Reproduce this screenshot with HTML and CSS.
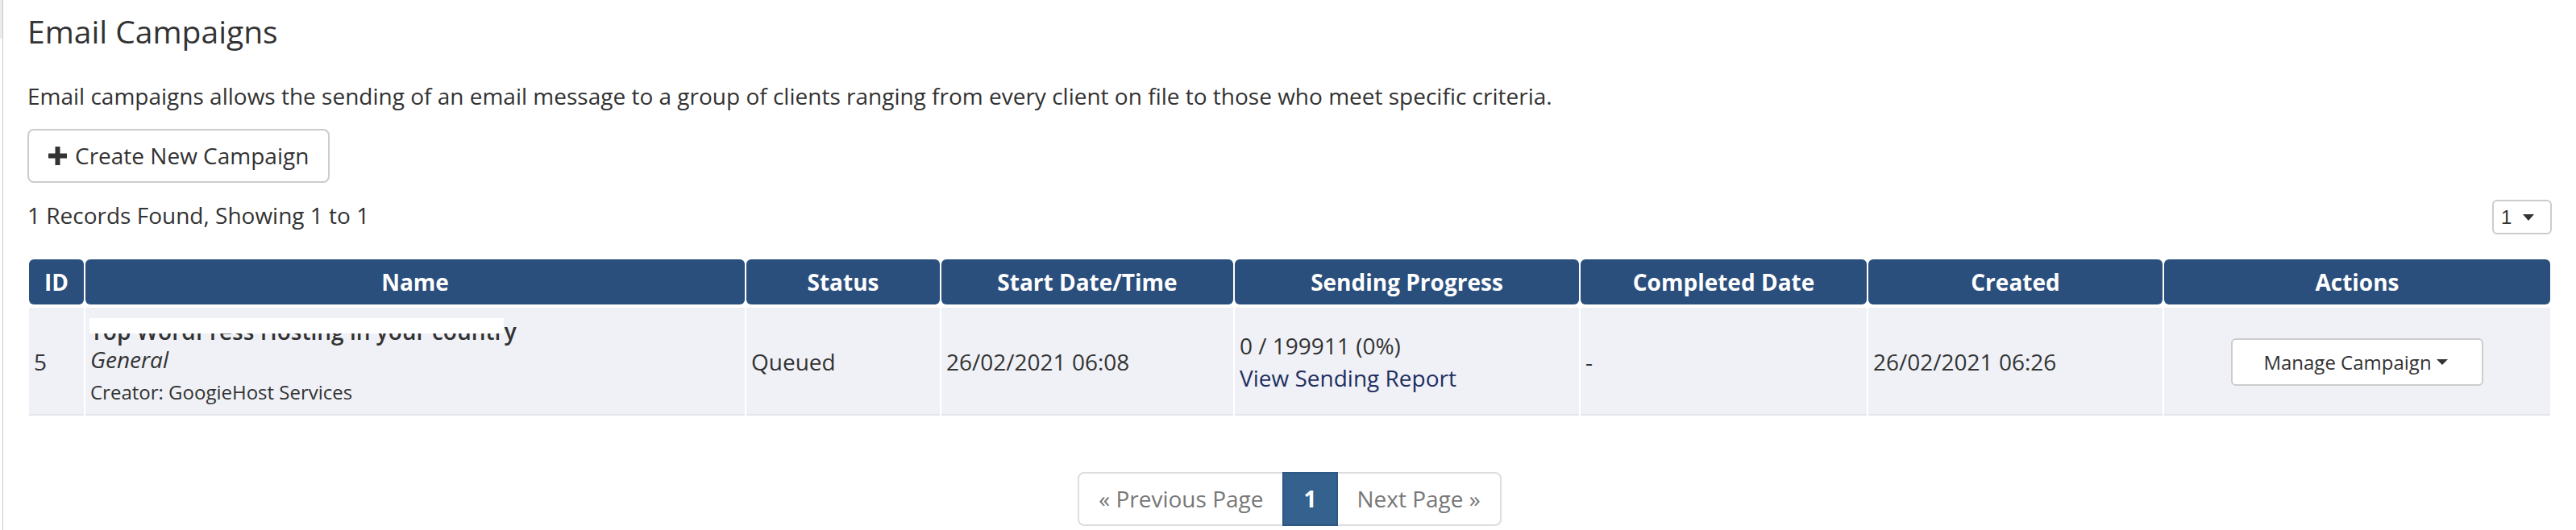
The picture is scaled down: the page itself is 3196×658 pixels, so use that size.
FILE: index.html
```html
<!DOCTYPE html>
<html lang="en">
<head>
<meta charset="utf-8">
<title>Email Campaigns</title>
<link rel="stylesheet" href="styles.css">
</head>
<body>
<div class="gutter"><div class="gutter-top"></div></div>
<div class="page">
  <h1 class="title">Email Campaigns</h1>
  <p class="intro">Email campaigns allows the sending of an email message to a group of clients ranging from every client on file to those who meet specific criteria.</p>
  <div class="top-actions">
    <button class="btn-create" type="button">
      <svg class="icon-plus" width="23" height="23" viewBox="0 0 23 23" aria-hidden="true"><rect x="0" y="8.5" width="23" height="6" fill="#333"/><rect x="8.5" y="0" width="6" height="23" fill="#333"/></svg>
      <span>Create New Campaign</span>
    </button>
  </div>
  <div class="records-bar">
    <span class="records">1 Records Found, Showing 1 to 1</span>
    <div class="page-select"><span>1</span><span class="caret-select"></span></div>
  </div>
  <table class="datatable">
    <colgroup>
      <col class="w-id"><col class="w-name"><col class="w-status"><col class="w-start"><col class="w-progress"><col class="w-completed"><col class="w-created"><col class="w-actions">
    </colgroup>
    <thead>
      <tr>
        <th>ID</th><th>Name</th><th>Status</th><th>Start Date/Time</th><th>Sending Progress</th><th>Completed Date</th><th>Created</th><th>Actions</th>
      </tr>
    </thead>
    <tbody>
      <tr>
        <td>5</td>
        <td>
          <div class="name-title"><span class="redact">Top WordPress Hosting in your country</span></div>
          <div class="name-type">General</div>
          <div class="name-creator">Creator: GoogieHost Services</div>
        </td>
        <td>Queued</td>
        <td>26/02/2021 06:08</td>
        <td>
          <div>0 / 199911 (0%)</div>
          <a class="report-link" href="#">View Sending Report</a>
        </td>
        <td>-</td>
        <td>26/02/2021 06:26</td>
        <td class="cell-actions">
          <div class="actions-wrap">
            <button class="btn-manage" type="button"><span>Manage Campaign</span><span class="caret"></span></button>
          </div>
        </td>
      </tr>
    </tbody>
  </table>
  <ul class="pager">
    <li><a class="pg pg-first" href="#">« Previous Page</a></li>
    <li><span class="pg pg-active">1</span></li>
    <li><a class="pg pg-last" href="#">Next Page »</a></li>
  </ul>
</div>
</body>
</html>
```

FILE: styles.css
```css
html, body {
  margin: 0;
  padding: 0;
  background: #fff;
}

body {
  display: flex;
  min-height: 100vh;
  font-family: "Open Sans", "DejaVu Sans", sans-serif;
  color: #333;
}

.gutter {
  width: 3px;
  flex: 0 0 3px;
}

.gutter-top {
  height: 48px;
  background: #ebebeb;
}

.page {
  flex: 1;
  border-left: 1px solid #c9c9c9;
  padding: 13px 30px 0 30px;
  min-width: 0;
}

.title {
  margin: 0;
  font-size: 39px;
  font-weight: 400;
  line-height: 52px;
  color: #333;
}

.intro {
  margin: 34px 0 0;
  font-size: 28px;
  line-height: 40px;
}

.top-actions {
  display: flex;
  margin-top: 21px;
}

.btn-create {
  display: inline-flex;
  align-items: center;
  gap: 10px;
  font-family: "Open Sans", sans-serif;
  font-size: 28px;
  line-height: 40px;
  color: #333;
  background: #fff;
  border: 2px solid #ccc;
  border-radius: 8px;
  padding: 11px 24px 12px;
  margin: 0;
}

.icon-plus {
  display: block;
}

.records-bar {
  display: flex;
  justify-content: space-between;
  align-items: flex-start;
  margin-top: 20px;
}

.records {
  font-size: 28px;
  line-height: 40px;
}

.page-select {
  box-sizing: border-box;
  margin-top: 1px;
  width: 74px;
  height: 43px;
  border: 2px solid #ccc;
  border-radius: 6px;
  display: flex;
  align-items: center;
  padding-left: 9px;
  gap: 14px;
  font-family: "Liberation Sans", Arial, sans-serif;
  font-size: 24px;
  color: #333;
}

.caret-select {
  width: 0;
  height: 0;
  border-top: 8px solid #333;
  border-left: 7.5px solid transparent;
  border-right: 7.5px solid transparent;
}

.datatable {
  margin-top: 27px;
  width: 100%;
  border-collapse: separate;
  border-spacing: 2px 4px;
  table-layout: fixed;
  font-size: 28px;
}

.w-id { width: 68px; }
.w-name { width: 818px; }
.w-status { width: 240px; }
.w-start { width: 362px; }
.w-progress { width: 427px; }
.w-completed { width: 355px; }
.w-created { width: 365px; }
.w-actions { width: 479px; }

.datatable th {
  background: #2b4f7d;
  color: #fff;
  font-weight: 700;
  line-height: 38px;
  padding: 9px 6px;
  border-radius: 6px;
  text-align: center;
  white-space: nowrap;
}

.datatable td {
  background: #eff1f6;
  padding: 12px 6px 10px;
  line-height: 40px;
  vertical-align: middle;
  text-align: left;
  border-bottom: 2px solid #e4e5ea;
}

.name-title {
  font-weight: 600;
  line-height: 35px;
  white-space: nowrap;
}

.redact {
  position: relative;
  display: inline-block;
}

.redact::after {
  content: "";
  position: absolute;
  left: -1px;
  top: 1px;
  width: 514px;
  height: 19px;
  background: #fff;
}

.name-type {
  font-style: italic;
  line-height: 35px;
}

.name-creator {
  font-size: 24px;
  line-height: 34px;
  margin-top: 6px;
}

.report-link {
  display: block;
  color: #1e2f60;
  text-decoration: none;
}

.datatable td.cell-actions {
  text-align: center;
}

.actions-wrap {
  display: flex;
  justify-content: center;
}

.btn-manage {
  display: inline-flex;
  align-items: center;
  gap: 6px;
  font-family: "Open Sans", sans-serif;
  font-size: 24px;
  line-height: 34px;
  color: #333;
  background: #fff;
  border: 2px solid #ccc;
  border-radius: 6px;
  padding: 11px 42px 10px 38px;
  margin: 0;
}

.caret {
  width: 0;
  height: 0;
  border-top: 7px solid #333;
  border-left: 7px solid transparent;
  border-right: 7px solid transparent;
}

.pager {
  display: flex;
  justify-content: center;
  list-style: none;
  margin: 66px 0 0;
  padding: 0;
}

.pg {
  display: block;
  font-size: 28px;
  line-height: 40px;
  padding: 11px 24px 12px;
  border: 2px solid #ddd;
  color: #777;
  background: #fff;
  text-decoration: none;
  margin-left: -2px;
}

.pg-first {
  margin-left: 0;
  border-radius: 8px 0 0 8px;
}

.pg-last {
  border-radius: 0 8px 8px 0;
}

.pg-active {
  position: relative;
  background: #35618e;
  border-color: #2f5783;
  color: #fff;
  font-weight: 700;
}
```
